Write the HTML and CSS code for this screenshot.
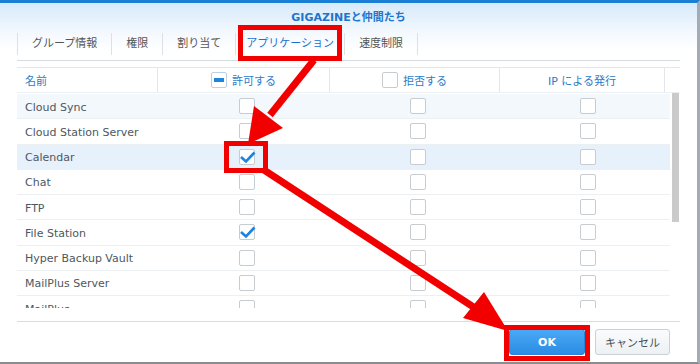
FILE: index.html
```html
<!DOCTYPE html>
<html lang="ja">
<head>
    <meta charset="UTF-8">
    <title>GIGAZINEと仲間たち</title>
    <link rel="stylesheet" href="styles.css">
</head>
<body>
    <div class="dialog">
        <!-- タイトルとタブ -->
        <div class="dialog-title">GIGAZINEと仲間たち</div>
        <nav class="tabs">
            <span class="tab">グループ情報</span>
            <span class="tab">権限</span>
            <span class="tab">割り当て</span>
            <span class="tab tab-active">アプリケーション</span>
            <span class="tab">速度制限</span>
        </nav>

        <!-- アプリケーション権限の一覧 -->
        <div class="grid">
            <div class="grid-head">
                <div class="head-cell head-name">名前</div>
                <div class="head-cell"><span class="check check-partial"></span>許可する</div>
                <div class="head-cell"><span class="check"></span>拒否する</div>
                <div class="head-cell">IP による発行</div>
                <div class="head-cell head-spacer"></div>
            </div>
            <div class="grid-body">
                <div class="rows" id="rows"></div>
                <div class="scrollbar"><div class="scroll-thumb"></div></div>
            </div>
        </div>

        <!-- ボタン -->
        <div class="dialog-foot">
            <button class="btn btn-primary">OK</button>
            <button class="btn">キャンセル</button>
        </div>

        <!-- 赤い注釈 -->
        <svg class="marks" width="700" height="364" viewBox="0 0 700 364">
            <g fill="none" stroke="#f20000" stroke-width="5">
                <rect x="240.5" y="27.5" width="99" height="31"/>
                <rect x="226.5" y="143.5" width="39" height="27"/>
                <rect x="506.5" y="327.5" width="81" height="31"/>
            </g>
            <g stroke="#f20000" stroke-width="7">
                <line x1="314" y1="60" x2="270" y2="115"/>
                <line x1="264" y1="170" x2="478" y2="310"/>
            </g>
            <g fill="#f20000">
                <polygon points="248,144 283,128 254,106"/>
                <polygon points="508,331 463,318 484,292"/>
            </g>
        </svg>
    </div>

    <script>
        // アプリケーションの一覧
        const apps = [
            { name: 'Cloud Sync', allow: false, tint: 'row-hover' },
            { name: 'Cloud Station Server', allow: false },
            { name: 'Calendar', allow: true, tint: 'row-selected' },
            { name: 'Chat', allow: false },
            { name: 'FTP', allow: false },
            { name: 'File Station', allow: true },
            { name: 'Hyper Backup Vault', allow: false },
            { name: 'MailPlus Server', allow: false },
            { name: 'MailPlus', allow: false }
        ];

        const tick = '<svg class="tick" width="18" height="16" viewBox="0 0 18 16"><path d="M2 8 L7 12.5 L15.5 3.5" fill="none" stroke="#1b84e3" stroke-width="2.6"/></svg>';

        document.getElementById('rows').innerHTML = apps.map(app => `
            <div class="row ${app.tint || ''}">
                <div class="cell cell-name">${app.name}</div>
                <div class="cell"><span class="check">${app.allow ? tick : ''}</span></div>
                <div class="cell"><span class="check"></span></div>
                <div class="cell cell-ip"><span class="check"></span></div>
            </div>
        `).join('');
    </script>
</body>
</html>
```

FILE: styles.css
```css
:root {
    --blue: #1f74cc;
    --line: #e3e7eb;
    --text: #4d5761;
    --ui-font: 'DejaVu Sans', 'Noto Sans CJK JP', sans-serif;
}
body {
    margin: 0;
    width: 700px;
    height: 364px;
    overflow: hidden;
    background: #fff;
    font-family: var(--ui-font);
    font-size: 11px;
    color: var(--text);
}
.dialog {
    position: relative;
    box-sizing: border-box;
    width: 700px;
    height: 364px;
    padding: 0 17px;
    border-top: 3px solid #1a7fd4;
    border-right: 3px solid #a3acb5;
    border-bottom: 2px solid #8a8d90;
    background: linear-gradient(180deg, #d6eafa 0px, #f4f9fe 30px, #fff 48px);
}
/* タイトル */
.dialog-title {
    height: 27px;
    box-sizing: border-box;
    padding-top: 8px;
    line-height: 14px;
    text-align: center;
    font-weight: bold;
    color: var(--blue);
}
/* タブ */
.tabs {
    display: flex;
    height: 30px;
    border-bottom: 1px solid #d6dbe0;
}
.tab {
    height: 22px;
    margin: 3px 0 5px;
    padding: 0 14px;
    line-height: 22px;
    color: #555;
    border-right: 1px solid #dde1e5;
}
.tab:first-child {
    border-left: 1px solid #dde1e5;
}
.tab-active {
    padding: 0 10px;
    color: #1c6fd0;
}
/* 一覧 */
.grid {
    margin-top: 6px;
    padding-bottom: 13px;
    border-top: 1px solid var(--line);
    border-bottom: 1px solid #d9dde1;
}
.grid-head {
    display: grid;
    grid-template-columns: 141px 172px 170px 165px 15px;
    height: 25px;
    border-bottom: 1px solid #edf0f2;
    box-sizing: border-box;
}
.head-cell {
    display: flex;
    align-items: center;
    justify-content: center;
    gap: 5px;
    color: #2a7ccb;
    border-right: 1px solid var(--line);
}
.head-name {
    justify-content: flex-start;
    padding-left: 8px;
}
.head-spacer {
    border-right: none;
}
.grid-body {
    display: flex;
    height: 215px;
    overflow: hidden;
}
.rows {
    width: 653px;
    padding-top: 1px;
}
.row {
    display: grid;
    grid-template-columns: 141px 178px 164px 170px;
    height: 25.25px;
    box-sizing: border-box;
    border-bottom: 1px solid #edf0f2;
}
.row-hover {
    background: #f3f8fd;
}
.row-selected {
    background: #e7f1fb;
}
.cell {
    display: flex;
    align-items: center;
    justify-content: center;
}
.cell-name {
    justify-content: flex-start;
    padding: 2px 0 0 8px;
    white-space: nowrap;
}
.cell-ip {
    padding-left: 6px;
}
.check {
    position: relative;
    display: inline-block;
    width: 16px;
    height: 16px;
    box-sizing: border-box;
    border: 1px solid #c7ccd1;
    border-radius: 2px;
    background: #fff;
}
.check-partial {
    border-color: #b9d2ea;
}
.check-partial::after {
    content: '';
    position: absolute;
    left: 2px;
    right: 2px;
    top: 5px;
    height: 4px;
    background: #1f86e0;
}
.tick {
    position: absolute;
    left: -1px;
    top: -1px;
}
.scrollbar {
    width: 10px;
    padding-left: 2px;
}
.scroll-thumb {
    width: 7px;
    height: 129px;
    background: #cacaca;
}
/* ボタン */
.dialog-foot {
    display: flex;
    justify-content: flex-end;
    gap: 10px;
    padding: 7px 10px 0 0;
}
.btn {
    height: 26px;
    width: 75px;
    padding: 0;
    font-family: var(--ui-font);
    font-size: 11px;
    color: #4a4f55;
    background: linear-gradient(180deg, #fafbfc, #eef1f4);
    border: 1px solid #c9d0d7;
    border-radius: 3px;
}
.btn-primary {
    width: 76px;
    color: #fff;
    font-weight: bold;
    background: linear-gradient(180deg, #4aa9f5, #2a8de4);
    border-color: #2784d8;
}
.marks {
    position: absolute;
    left: 0;
    top: -3px;
    pointer-events: none;
}
```
